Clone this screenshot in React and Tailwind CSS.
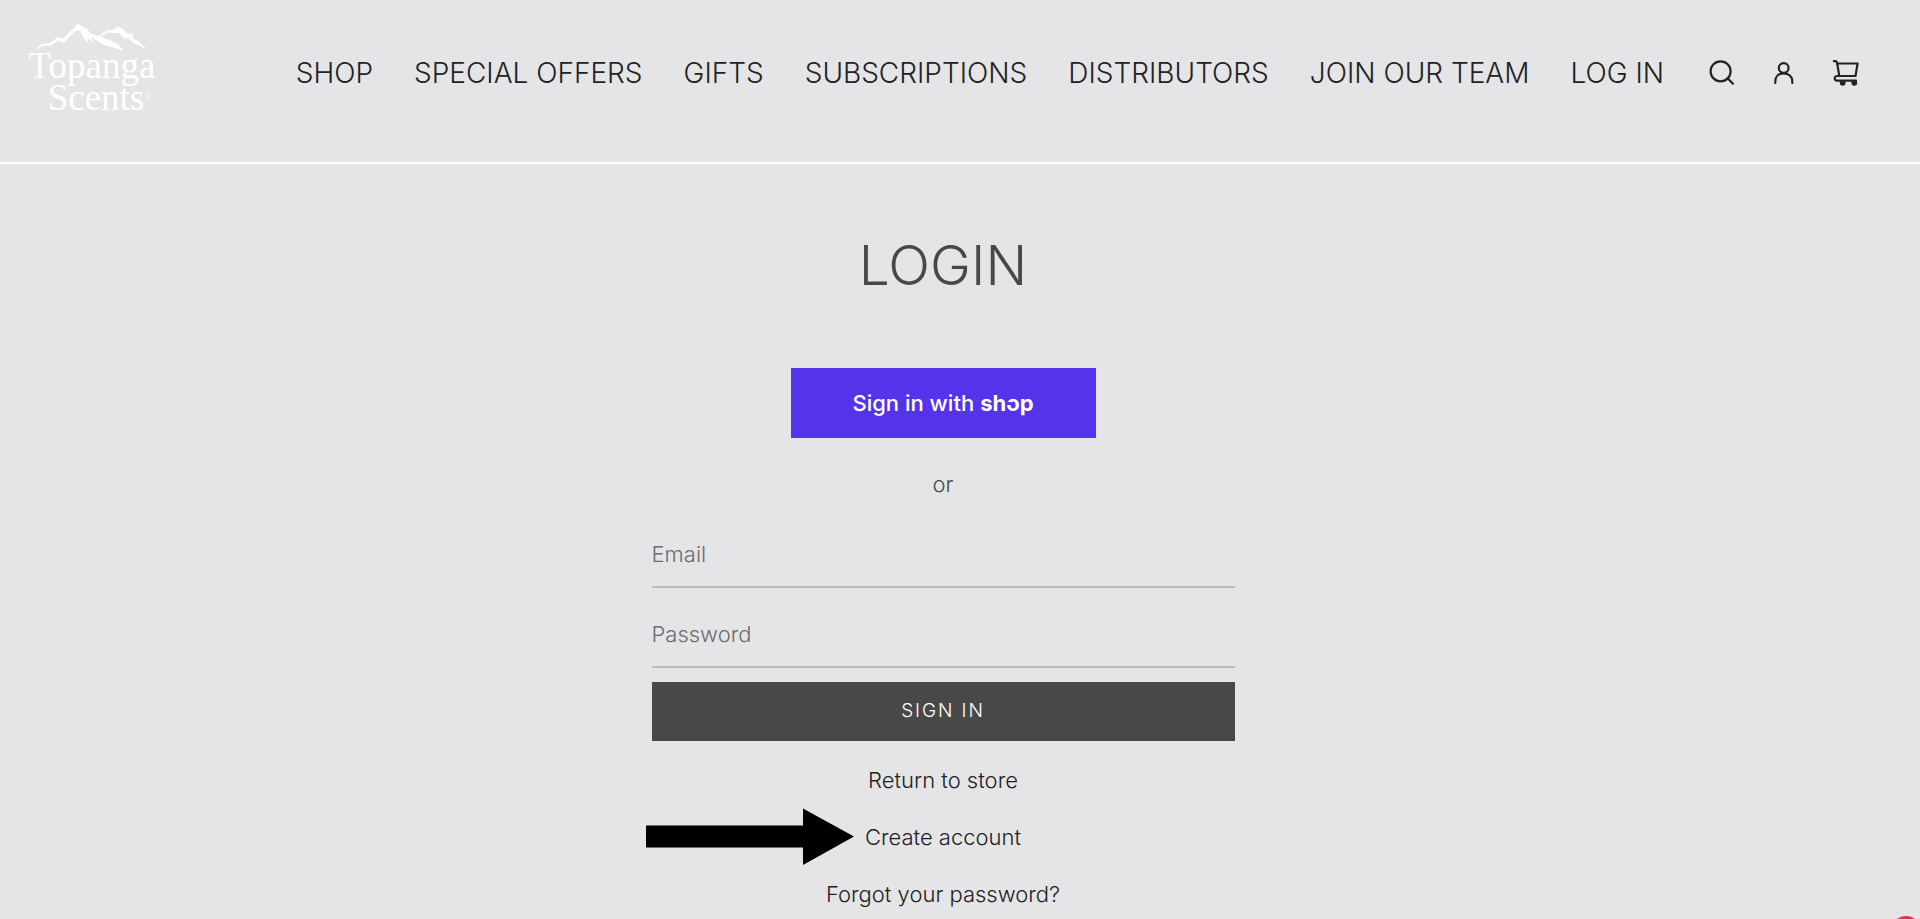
const navItems = [
  'SHOP',
  'SPECIAL OFFERS',
  'GIFTS',
  'SUBSCRIPTIONS',
  'DISTRIBUTORS',
  'JOIN OUR TEAM',
  'LOG IN',
];

function Logo() {
  return (
    <a
      href="#"
      aria-label="Topanga Scents"
      className="flex w-[136px] flex-col items-center font-['Liberation_Serif',serif] text-[37px] leading-[32px] font-normal text-white"
    >
      <svg viewBox="0 0 110 28" className="-mb-[2px] h-7 w-[110px]" fill="currentColor" aria-hidden="true">
        <path d="M0 24 L5 19.500 L8 20 L13 19 L21 13 L26 15 L33 7 L36 5.500 L39 1 L42 0 L45 2.500 L49 4 L54 9.500 L60 12 L64 11 L69 6.500 L76 6 L81 2.500 L86 5 L91 10 L95 9 L97 15 L102 17.500 L104 20 L109 24 L108 25 L102 21.500 L96 19 L92 14.500 L86 14 L82 9 L76 9 L71 8.500 L64 12.500 L68 14.500 L75 17 L81 20 L84 24 L86 25 L85 26.500 L77 23.500 L68 21.500 L60 16.500 L54 13 L57 19.500 L52 15 L50 13 L52 20.500 L46 13 L43 7 L39 6.500 L33 12 L27 18.500 L21 16.500 L14 21.500 L6 21.500 L1 25 Z" />
      </svg>
      <span>Topanga</span>
      <span className="relative ml-2">
        Scents
        <span className="absolute top-0 left-full text-[8px]">®</span>
      </span>
    </a>
  );
}

const iconProps = {
  viewBox: '0 0 32 32',
  className: 'size-8',
  fill: 'none',
  stroke: 'currentColor',
  strokeWidth: 2.2,
  strokeLinecap: 'round',
  strokeLinejoin: 'round',
  'aria-hidden': true,
};

function SearchIcon() {
  return (
    <svg {...iconProps}>
      <circle cx="14.600" cy="14.300" r="10" />
      <path d="M21.800 21.500 L27 26.700" />
    </svg>
  );
}

function AccountIcon() {
  return (
    <svg {...iconProps}>
      <circle cx="15.700" cy="11" r="4.900" />
      <path d="M7.300 26 V24.500 C7.300 19.500 10.700 16.300 15.700 16.300 C20.700 16.300 24.300 19.500 24.300 24.500 V26" />
    </svg>
  );
}

function CartIcon() {
  return (
    <svg {...iconProps}>
      <path d="M3.800 4.200 H5.500 Q6.900 4.300 7.200 6.300 L9.300 19" />
      <path d="M7.300 6.500 H27.600 L25.500 19 H7 A2.300 2.300 0 0 0 7 23.600 H26" />
      <circle cx="12.700" cy="25.800" r="1.800" fill="currentColor" />
      <circle cx="24.300" cy="25.800" r="1.800" fill="currentColor" />
    </svg>
  );
}

function Field({ id, type, label }) {
  return (
    <div className="flex h-20 w-full items-end border-b-2 border-[#bcbcbe] pb-3">
      <label htmlFor={id} className="sr-only">{label}</label>
      <input
        id={id}
        type={type}
        placeholder={label}
        className="h-10 w-full bg-transparent leading-8 outline-none placeholder:text-[#6c6c6e] placeholder:opacity-100"
      />
    </div>
  );
}

export default function App() {
  return (
    <div className="min-h-screen overflow-hidden bg-[#e5e5e8] font-[Inter,sans-serif] font-light text-[#222]">
      <header className="flex h-[164px] items-start justify-between border-b-2 border-white pt-6 pr-[58px] pl-6">
        <Logo />
        <div className="flex h-[98px] items-center gap-[42px]">
          <nav className="flex items-center gap-[41px] text-[28px] whitespace-nowrap">
            {navItems.map((item) => (
              <a key={item} href="#">{item}</a>
            ))}
          </nav>
          <div className="flex items-center gap-[30px]">
            <button type="button" aria-label="Search"><SearchIcon /></button>
            <a href="#" aria-label="Account"><AccountIcon /></a>
            <a href="#" aria-label="Cart"><CartIcon /></a>
          </div>
        </div>
      </header>

      <main className="flex flex-col items-center pr-[34px] text-[22px]">
        <h1 className="mt-[61px] text-[55px] leading-[80px] text-[#484848]">LOGIN</h1>
        <button
          type="button"
          className="mt-[63px] flex h-[70px] w-[305px] items-center justify-center gap-[6px] bg-[#5433eb] text-[22px] font-medium text-white"
        >
          <span>Sign in with</span>
          <span className="font-bold">
            sh
            <span className="relative">
              o
              <span className="absolute top-[12px] left-0 h-[3px] w-[5px] bg-[#5433eb]" />
            </span>
            p
          </span>
        </button>
        <p className="mt-[30px] leading-8 text-[#484848]">or</p>

        <form className="mt-2 flex w-full max-w-[583px] flex-col" onSubmit={(e) => e.preventDefault()}>
          <Field id="email" type="email" label="Email" />
          <Field id="password" type="password" label="Password" />
          <button type="submit" className="mt-[14px] h-[59px] bg-[#484848] text-[19px] tracking-widest text-white">
            SIGN IN
          </button>
        </form>

        <ul className="mt-[11px] w-full max-w-[583px] text-center leading-[57px]">
          <li><a href="#">Return to store</a></li>
          <li className="relative">
            <svg viewBox="0 0 208 58" className="absolute -top-px -left-[6px] h-[58px] w-[208px]" aria-hidden="true">
              <path d="M0 17.500 H157 V0.500 L208 28.500 L157 57 V39.500 H0 Z" />
            </svg>
            <a href="#">Create account</a>
          </li>
          <li><a href="#">Forgot your password?</a></li>
        </ul>
      </main>

      <div className="fixed right-0 -bottom-[25px] size-7 rounded-full bg-[#f22c50]" />
    </div>
  );
}
